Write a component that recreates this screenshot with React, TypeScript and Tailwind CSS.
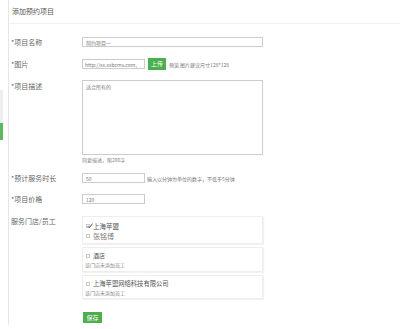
import React from "react";

const Check = ({ checked }: { checked?: boolean }) => (
  <span className="inline-flex w-[4px] h-[4px] border border-[#c8c8c8] bg-white items-center justify-center mr-[3px] relative">
    {checked && (
      <svg viewBox="0 0 10 10" className="absolute w-[6px] h-[6px] -top-[2px] left-0">
        <path d="M1 5 L4 8 L9 1" stroke="#555" strokeWidth="1.6" fill="none" />
      </svg>
    )}
  </span>
);

export default function App() {
  return (
    <div className="w-[400px] h-[329px] bg-white flex overflow-hidden text-[#666] font-['Noto_Sans_CJK_SC','Noto_Sans',sans-serif]">
      <div className="w-[8px] flex flex-col">
        <div className="h-[90px]" />
        <div className="h-[33px] w-[3px] bg-[#eeeeee]" />
        <div className="h-[17px] w-[3px] bg-[#5cb85c]" />
      </div>
      <div className="w-[392px] h-[325px] border-l border-[#e6e6e6] flex flex-col">
        <div className="h-[24px] border-b border-[#efefef] flex items-center pl-[3px] text-[7px] text-[#555] leading-none">
          添加预约项目
        </div>

        {/* name */}
        <div className="mt-[13px] flex items-center h-[10px]">
          <div className="w-[73px] pl-[2px] text-[7px] leading-none">*项目名称</div>
          <div className="w-[181px] h-[10px] border border-[#ccc] text-[5px] leading-none flex items-center pl-[3px] text-[#777]">
            简约项目一
          </div>
        </div>

        {/* picture */}
        <div className="mt-[11px] flex items-center h-[12px]">
          <div className="w-[73px] pl-[2px] text-[7px] leading-none">*图片</div>
          <div className="w-[63px] h-[10px] border border-[#ccc] text-[5px] leading-none flex items-center pl-[2px] text-[#777] overflow-hidden whitespace-nowrap">
            http://xx.xxbcms.com,
          </div>
          <div className="ml-[3px] w-[18px] h-[12px] bg-[#4cae4c] text-white text-[6px] leading-none flex items-center justify-center">
            上传
          </div>
          <div className="ml-[3px] text-[5px] leading-none text-[#777] whitespace-nowrap">预览 图片建议尺寸128*128</div>
        </div>

        {/* description */}
        <div className="mt-[10px] flex items-start">
          <div className="w-[73px] pl-[2px] text-[7px] leading-none mt-[3px]">*项目描述</div>
          <div className="w-[181px] h-[75px] border border-[#ccc] text-[5px] leading-none pl-[3px] pt-[3px] text-[#777]">
            适合所有的
          </div>
        </div>
        <div className="ml-[73px] mt-[2px] text-[5px] leading-none text-[#888]">简要描述，限200字</div>

        {/* duration */}
        <div className="mt-[11px] flex items-center h-[10px]">
          <div className="w-[73px] pl-[2px] text-[7px] leading-none">*预计服务时长</div>
          <div className="w-[63px] h-[10px] border border-[#ccc] text-[5px] leading-none flex items-center pl-[3px] text-[#777]">
            50
          </div>
          <div className="ml-[2px] text-[5px] leading-none text-[#777] whitespace-nowrap">输入以分钟为单位的数字，不低于5分钟</div>
        </div>

        {/* price */}
        <div className="mt-[11px] flex items-center h-[10px]">
          <div className="w-[73px] pl-[2px] text-[7px] leading-none">*项目价格</div>
          <div className="w-[63px] h-[10px] border border-[#ccc] text-[5px] leading-none flex items-center pl-[3px] text-[#777]">
            120
          </div>
        </div>

        {/* stores */}
        <div className="mt-[12px] flex items-start">
          <div className="w-[73px] pl-[2px] text-[7px] leading-none mt-[2px]">服务门店/员工</div>
          <div className="w-[181px] flex flex-col gap-[3px]">
            <div className="h-[28px] border border-[#eee] shadow-[1px_1px_1px_#f2f2f2] flex flex-col pl-[3px] pt-[6px] gap-[3px]">
              <div className="flex items-center text-[6.5px] leading-none text-[#555]">
                <Check checked />
                上海苹盟
              </div>
              <div className="flex items-center text-[7px] leading-none text-[#777]">
                <Check />
                张铭博
              </div>
            </div>
            <div className="h-[25px] border border-[#eee] shadow-[1px_1px_1px_#f2f2f2] flex flex-col pl-[2px] pt-[5px] gap-[3px]">
              <div className="flex items-center text-[6px] leading-none text-[#555] pl-[1px]">
                <Check />
                酒店
              </div>
              <div className="text-[5px] leading-none text-[#888]">该门店未添加员工</div>
            </div>
            <div className="h-[24px] border border-[#eee] shadow-[1px_1px_1px_#f2f2f2] flex flex-col pl-[2px] pt-[5px] gap-[3px]">
              <div className="flex items-center text-[6.3px] leading-none text-[#555] pl-[1px]">
                <Check />
                上海苹盟网络科技有限公司
              </div>
              <div className="text-[5px] leading-none text-[#888]">该门店未添加员工</div>
            </div>
          </div>
        </div>

        {/* save */}
        <div className="mt-[13px] ml-[74px] w-[19px] h-[11px] bg-[#4cae4c] text-white text-[6px] leading-none flex items-center justify-center">
          保存
        </div>
      </div>
    </div>
  );
}
